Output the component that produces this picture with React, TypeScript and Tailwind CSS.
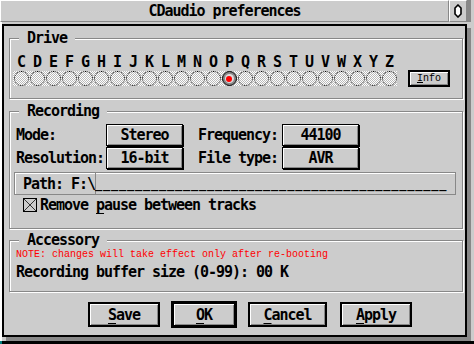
import React from "react";

const letters = "CDEFGHIJKLMNOPQRSTUVWXYZ".split("");

function Group({
  title,
  className,
  children,
}: {
  title: string;
  className: string;
  children: React.ReactNode;
}) {
  return (
    <div
      className={`relative ml-[5px] w-[454px] border border-[#888] shadow-[inset_1px_1px_0_#fff,1px_1px_0_#fff] ${className}`}
    >
      <div className="absolute -top-[9px] left-[9px] bg-[#ccc] px-[8px] leading-[16px] font-bold">
        {title}
      </div>
      {children}
    </div>
  );
}

function PopBtn({ children }: { children: React.ReactNode }) {
  return (
    <div className="flex h-[22px] w-[77px] items-center justify-center border border-black bg-[#ccc] font-bold shadow-[inset_1px_1px_0_#fff,inset_-1px_-1px_0_#888,1px_1px_0_#000]">
      {children}
    </div>
  );
}

function ExitBtn({
  label,
  w,
  thick,
}: {
  label: string;
  w: string;
  thick?: boolean;
}) {
  return (
    <div
      className={`flex items-center justify-center border-black bg-[#ccc] font-bold shadow-[inset_1px_1px_0_#fff,inset_-1px_-1px_0_#888] ${w} ${
        thick ? "h-[27px] border-[3px]" : "h-[25px] border-2"
      }`}
    >
      <span>
        <span className="underline decoration-1 underline-offset-[3px]">{label[0]}</span>
        {label.slice(1)}
      </span>
    </div>
  );
}

export default function App() {
  return (
    <div className="flex h-[344px] w-[474px] flex-col overflow-hidden bg-black font-['DejaVu_Sans_Mono',monospace] text-[15px] leading-[16px] tracking-[-1.03px] text-black">
      <div className="flex h-[341px]">
        {/* window */}
        <div className="flex w-[471px] flex-col">
          {/* title bar */}
          <div className="flex h-[22px] bg-[#ccc]">
            <div className="flex w-[449px] items-center justify-center border-b border-l border-r border-t border-b-[#888] border-l-white border-r-[#888] border-t-white font-bold">
              CDaudio preferences
            </div>
            <div className="flex w-[18px] items-center justify-center border-b border-l border-r border-t border-b-[#888] border-l-white border-r-[#888] border-t-white">
              <svg width="8" height="14" viewBox="0 0 8 14">
                <polygon
                  points="4,1 7,4 7,10 4,13 1,10 1,4"
                  fill="#fff"
                  stroke="#000"
                  strokeWidth="1.6"
                />
              </svg>
            </div>
            <div className="w-[4px] bg-[#888]" />
          </div>

          {/* work area */}
          <div className="flex flex-1 flex-col border-l-2 border-white bg-[#ccc]">
            <div className="mt-[2px] flex h-[313px] w-[465px] flex-col border-2 border-black shadow-[4px_4px_0_#888]">
              {/* Drive */}
              <Group title="Drive" className="mt-[12px] h-[61px]">
                <div className="flex items-end pl-[3px] pt-[15px]">
                  <div className="flex flex-col">
                    <div className="flex font-bold">
                      {letters.map((l) => (
                        <div key={l} className="w-[16px] text-center">
                          {l}
                        </div>
                      ))}
                    </div>
                    <div className="mt-[1px] flex bg-[repeating-conic-gradient(#fff_0_25%,#bbb_0_50%)] bg-[length:2px_2px]">
                      {letters.map((l) =>
                        l === "P" ? (
                          <div key={l} className="flex h-[15px] w-[16px] items-center justify-center">
                            <div className="flex h-[15px] w-[15px] items-center justify-center rounded-full border border-black bg-[#888]">
                              <div className="flex h-[9px] w-[9px] items-center justify-center rounded-full bg-[#ddd]">
                                <div className="h-[6px] w-[6px] rounded-full bg-[#ff0000]" />
                              </div>
                            </div>
                          </div>
                        ) : (
                          <div key={l} className="flex h-[15px] w-[16px] items-center justify-center">
                            <div className="h-[15px] w-[15px] rounded-full border border-dotted border-black" />
                          </div>
                        )
                      )}
                    </div>
                  </div>
                  <div className="mb-[-1px] ml-[11px] flex h-[17px] w-[42px] items-center justify-center border-2 border-black bg-[#ccc] font-['Liberation_Mono',monospace] text-[10px] tracking-normal shadow-[inset_1px_1px_0_#fff,inset_-1px_-1px_0_#888]">
                    <span>
                      <span className="underline">I</span>nfo
                    </span>
                  </div>
                </div>
              </Group>

              {/* Recording */}
              <Group title="Recording" className="mt-[12px] h-[118px]">
                <div className="flex flex-col pl-[6px] pt-[12px]">
                  <div className="flex items-center font-bold">
                    <div className="w-[90px]">Mode:</div>
                    <PopBtn>Stereo</PopBtn>
                    <div className="ml-[15px] w-[84px]">Frequency:</div>
                    <PopBtn>44100</PopBtn>
                  </div>
                  <div className="mt-[1px] flex items-center font-bold">
                    <div className="w-[90px]">Resolution:</div>
                    <PopBtn>16-bit</PopBtn>
                    <div className="ml-[15px] w-[84px]">File type:</div>
                    <PopBtn>AVR</PopBtn>
                  </div>
                  <div className="-ml-[2px] mt-[3px] flex h-[23px] w-[442px] items-center border border-[#888] pl-[8px] font-bold shadow-[inset_1px_1px_0_#fff]">
                    <span>Path: F:\</span>
                    <span className="h-[21px] w-[1px] bg-[#888]" />
                    <span className="-ml-[1px] text-[12px] tracking-[0.78px]">{"_".repeat(44)}</span>
                  </div>
                  <div className="mt-[2px] flex items-center font-bold">
                    <div className="ml-[7px] flex h-[14px] w-[14px] items-center justify-center border border-black bg-[#ccc]">
                      <svg width="12" height="12" viewBox="0 0 12 12">
                        <path d="M0 0 L12 12 M12 0 L0 12" stroke="#333" strokeWidth="1" />
                      </svg>
                    </div>
                    <div className="ml-[3px]">
                      Remove <span className="underline underline-offset-[3px]">p</span>ause between tracks
                    </div>
                  </div>
                </div>
              </Group>

              {/* Accessory */}
              <Group title="Accessory" className="mt-[11px] h-[52px]">
                <div className="flex flex-col pl-[6px] pt-[9px]">
                  <div className="font-['Liberation_Mono',monospace] text-[10px] leading-[10px] tracking-normal text-[#ff0000]">
                    NOTE: changes will take effect only after re-booting
                  </div>
                  <div className="mt-[4px] font-bold">Recording buffer size (0-99): 00 K</div>
                </div>
              </Group>

              {/* exit buttons */}
              <div className="ml-[84px] mt-[9px] flex items-center">
                <ExitBtn label="Save" w="w-[72px]" />
                <div className="ml-[11px]">
                  <ExitBtn label="OK" w="w-[66px]" thick />
                </div>
                <div className="ml-[11px]">
                  <ExitBtn label="Cancel" w="w-[79px]" />
                </div>
                <div className="ml-[13px]">
                  <ExitBtn label="Apply" w="w-[72px]" />
                </div>
              </div>
            </div>
          </div>
        </div>
        <div className="w-[3px] bg-[#ccc]" />
      </div>
      <div className="h-[3px] w-[2px] bg-[#008080]" />
    </div>
  );
}
